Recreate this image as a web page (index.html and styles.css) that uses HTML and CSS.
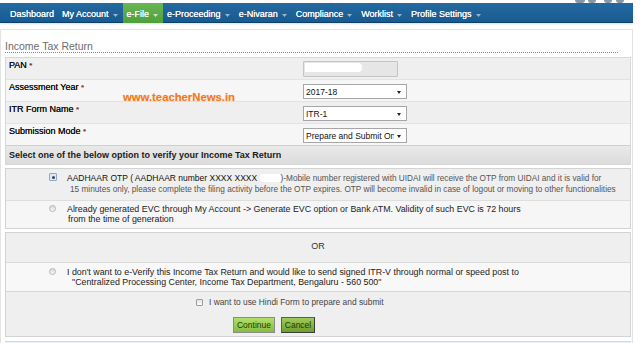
FILE: index.html
```html
<!DOCTYPE html>
<html lang="en">
<head>
<meta charset="utf-8">
<title>Income Tax Return</title>
<link rel="stylesheet" href="styles.css">
</head>
<body>
<div class="topstrip">
  <span class="blob b1"></span><span class="blob b2"></span><span class="blob b3"></span><span class="blob b4"></span>
</div>
<nav class="nav">
  <a class="nav-item">Dashboard</a>
  <a class="nav-item">My Account<svg class="caret" viewBox="0 0 5 3"><path d="M0 0H5L2.5 3Z"/></svg></a>
  <a class="nav-item active">e-File<svg class="caret" viewBox="0 0 5 3"><path d="M0 0H5L2.5 3Z"/></svg></a>
  <a class="nav-item">e-Proceeding<svg class="caret" viewBox="0 0 5 3"><path d="M0 0H5L2.5 3Z"/></svg></a>
  <a class="nav-item">e-Nivaran<svg class="caret" viewBox="0 0 5 3"><path d="M0 0H5L2.5 3Z"/></svg></a>
  <a class="nav-item">Compliance<svg class="caret" viewBox="0 0 5 3"><path d="M0 0H5L2.5 3Z"/></svg></a>
  <a class="nav-item">Worklist<svg class="caret" viewBox="0 0 5 3"><path d="M0 0H5L2.5 3Z"/></svg></a>
  <a class="nav-item">Profile Settings<svg class="caret" viewBox="0 0 5 3"><path d="M0 0H5L2.5 3Z"/></svg></a>
</nav>
<main class="panel">
  <div class="title">Income Tax Return</div>
  <div class="form-table">
    <div class="row dark">
      <div class="label">PAN <span class="req">*</span></div>
      <div class="field"><div class="pan-input"><span class="mask"></span></div></div>
    </div>
    <div class="row light">
      <div class="label">Assessment Year <span class="req">*</span></div>
      <div class="field"><div class="select"><span class="sel-text">2017-18</span><svg class="sel-arrow" viewBox="0 0 4 3"><path d="M0 0H4L2 3Z"/></svg></div></div>
    </div>
    <div class="row dark">
      <div class="label">ITR Form Name <span class="req">*</span></div>
      <div class="field"><div class="select"><span class="sel-text">ITR-1</span><svg class="sel-arrow" viewBox="0 0 4 3"><path d="M0 0H4L2 3Z"/></svg></div></div>
    </div>
    <div class="row light last">
      <div class="label">Submission Mode <span class="req">*</span></div>
      <div class="field"><div class="select"><span class="sel-text">Prepare and Submit Online</span><svg class="sel-arrow" viewBox="0 0 4 3"><path d="M0 0H4L2 3Z"/></svg></div></div>
    </div>
    <div class="section-head">Select one of the below option to verify your Income Tax Return</div>
  </div>

  <div class="opt-box">
    <div class="opt-row r1">
      <span class="radio checked"></span>
      <div class="opt-text">
        <div class="line"><span class="strong">AADHAAR OTP ( AADHAAR number XXXX XXXX </span><span class="mask2"></span><span class="grey">)-Mobile number registered with UIDAI will receive the OTP from UIDAI and it is valid for</span></div>
        <div class="line grey indent">15 minutes only, please complete the filing activity before the OTP expires. OTP will become invalid in case of logout or moving to other functionalities</div>
      </div>
    </div>
    <div class="opt-row r2">
      <span class="radio"></span>
      <div class="opt-text dark-text">
        <div class="line">Already generated EVC through My Account -&gt; Generate EVC option or Bank ATM. Validity of such EVC is 72 hours</div>
        <div class="line indent1">from the time of generation</div>
      </div>
    </div>
  </div>

  <div class="opt-box second">
    <div class="or-row">OR</div>
    <div class="opt-row r3">
      <span class="radio"></span>
      <div class="opt-text dark-text">
        <div class="line">I don't want to e-Verify this Income Tax Return and would like to send signed ITR-V through normal or speed post to</div>
        <div class="line indent2">"Centralized Processing Center, Income Tax Department, Bengaluru - 560 500"</div>
      </div>
    </div>
    <div class="actions">
      <div class="hindi"><span class="checkbox"></span><span>I want to use Hindi Form to prepare and submit</span></div>
      <div class="buttons">
        <button class="btn continue">Continue</button>
        <button class="btn cancel">Cancel</button>
      </div>
    </div>
  </div>
  <div class="footer-strip"></div>
  <div class="watermark">www.teacherNews.in</div>
</main>
</body>
</html>
```

FILE: styles.css
```css
html, body {
  margin: 0;
  padding: 0;
}
body {
  background: #ffffff;
  font-family: "Liberation Sans", Arial, sans-serif;
  width: 640px;
  height: 343px;
  overflow: hidden;
}

/* top strip with faint blobs */
.topstrip {
  height: 3px;
  width: 633px;
  display: flex;
  justify-content: flex-end;
  padding-right: 9px;
  box-sizing: border-box;
}
.blob {
  height: 3px;
  background: #8797ab;
  border-radius: 0 0 4px 4px;
}
.b1 { width: 10px; }
.b2 { width: 8px; margin-left: 3px; }
.b3 { width: 8px; margin-left: 8px; }
.b4 { width: 8px; margin-left: 4px; }

/* navigation */
.nav {
  display: flex;
  height: 20px;
  width: 633px;
  box-sizing: border-box;
  padding-left: 6px;
  background: linear-gradient(#2469a1, #175a8f);
  box-shadow: inset 0 -1px 0 #0c406e, 0 1px 2px rgba(0, 0, 0, 0.14);
  position: relative;
  z-index: 1;
}
.nav-item {
  display: flex;
  align-items: center;
  padding: 1px 4px 0 4px;
  color: #ffffff;
  font-size: 9px;
  text-decoration: none;
  white-space: nowrap;
  text-shadow: 0 0 0.4px #ffffff;
}
.nav-item.active {
  background: linear-gradient(#67b753, #4f9f3d);
}
.caret {
  width: 5px;
  height: 3px;
  margin: 3px 1px 0 4px;
  fill: #9db3c8;
}
.nav-item.active .caret {
  fill: #cde4c4;
}

/* main panel */
.panel {
  position: relative;
  margin-top: 6px;
  width: 633px;
  height: 314px;
  box-sizing: border-box;
  border: 1px solid #e3e3e3;
  border-bottom: none;
  padding: 10px 0 0 4px;
}
.title {
  width: 613px;
  font-size: 10.5px;
  line-height: 12px;
  color: #6c6c6c;
  border-bottom: 1px dotted #8a8a8a;
}

.form-table {
  margin-top: 4px;
  width: 626px;
  box-sizing: border-box;
  border: 1px solid #d8d8d8;
}
.row {
  display: grid;
  grid-template-columns: 297px 1fr;
  height: 22px;
  box-sizing: border-box;
  border-bottom: 1px solid #e2e2e2;
}
.row.dark { background: #efefef; }
.row.light { background: #f6f6f6; }
.row.last { border-bottom-color: #cfcfcf; }
.label {
  padding: 2px 0 0 3px;
  font-size: 9px;
  line-height: 11px;
  color: #111111;
  text-shadow: 0 0 0.3px #111111;
}
.req {
  color: #a83a3a;
  font-size: 8px;
}
.pan-input {
  margin-top: 3px;
  width: 95px;
  height: 16px;
  box-sizing: border-box;
  border: 1px solid #c4c4c4;
  border-radius: 1px;
  background: #e6e6e6;
  padding: 1px 0 0 1px;
}
.mask {
  display: block;
  width: 57px;
  height: 9px;
  background: #ffffff;
  border-radius: 0 4px 4px 0;
}
.select {
  margin-top: 4px;
  width: 104px;
  height: 15px;
  box-sizing: border-box;
  border: 1px solid #a6a6a6;
  background: #ffffff;
  display: flex;
  align-items: center;
  padding-left: 2px;
  font-size: 8.5px;
  color: #111111;
}
.sel-text {
  flex: 1;
  overflow: hidden;
  white-space: nowrap;
}
.sel-arrow {
  flex: none;
  width: 4px;
  height: 3px;
  margin: 1px 5px 0 3px;
  fill: #222222;
}
.section-head {
  height: 18px;
  line-height: 18px;
  padding-left: 3px;
  font-size: 9px;
  font-weight: bold;
  color: #1a1a1a;
  background: linear-gradient(#e9e9e9, #dcdcdc);
}

/* option boxes */
.opt-box {
  margin-top: 3px;
  width: 626px;
  box-sizing: border-box;
  border: 1px solid #d3d3d3;
}
.opt-row {
  display: flex;
  align-items: flex-start;
  padding-left: 43px;
  border-bottom: 1px solid #dedede;
}
.r1 {
  background: #efefef;
  padding-top: 4px;
  padding-bottom: 5px;
}
.r2 {
  background: #f6f6f6;
  padding-top: 3px;
  padding-bottom: 4px;
  border-bottom: none;
}
.r3 {
  background: #f8f8f8;
  padding-top: 4px;
  padding-bottom: 4px;
  border-bottom-color: #d6d6d6;
}
.radio {
  flex: none;
  width: 7px;
  height: 7px;
  margin: 1px 11px 0 0;
  box-sizing: border-box;
  border-radius: 50%;
  border: 1px solid #b4b4b4;
  background: linear-gradient(#d9d9d9, #f8f8f8);
}
.radio.checked {
  position: relative;
  width: 8px;
  height: 8px;
  margin: 0 10px 0 0;
  border-radius: 1px;
  border: 1px solid #8fa9c6;
  background: #dfe7ef;
}
.radio.checked::after {
  content: "";
  position: absolute;
  left: 1.5px;
  top: 1.5px;
  width: 3px;
  height: 3px;
  border-radius: 50%;
  background: #37475a;
}
.opt-text .line {
  white-space: nowrap;
}
.r1 .line {
  line-height: 10.5px;
  font-size: 8.25px;
}
.strong {
  font-size: 8.5px;
  color: #111111;
}
.grey {
  color: #555555;
  font-size: 8.25px;
}
.mask2 {
  display: inline-block;
  width: 21px;
  height: 8px;
  background: #ffffff;
  border-radius: 3px;
  vertical-align: -1px;
}
.indent { padding-left: 3px; }
.indent1 { padding-left: 1px; }
.indent2 { padding-left: 5px; }
.dark-text .line {
  font-size: 8.85px;
  line-height: 10px;
  color: #222222;
}
.or-row {
  height: 30px;
  box-sizing: border-box;
  line-height: 27px;
  text-align: center;
  font-size: 9px;
  color: #333333;
  background: #efefef;
  border-bottom: 1px solid #dadada;
}
.actions {
  background: #efefef;
  padding: 4.5px 0 3px 0;
}
.hindi {
  display: flex;
  align-items: center;
  padding-left: 190px;
  font-size: 8.4px;
  line-height: 11px;
  color: #444444;
}
.checkbox {
  flex: none;
  width: 7px;
  height: 7px;
  box-sizing: border-box;
  margin-right: 6px;
  border: 1px solid #9c9c9c;
  border-radius: 1px;
  background: linear-gradient(#e4e4e4, #fbfbfb);
}
.buttons {
  display: flex;
  gap: 6px;
  margin-top: 9.5px;
  padding-left: 227px;
}
.btn {
  height: 16px;
  box-sizing: border-box;
  padding: 0;
  font-family: "Liberation Sans", Arial, sans-serif;
  font-size: 8.5px;
  line-height: 14px;
  color: #1f380b;
  text-align: center;
}
.btn.continue {
  width: 42px;
  border: 1px solid #8a8a8a;
  background: linear-gradient(#b4de6c, #84bd3e);
}
.btn.cancel {
  width: 34px;
  border: 1px solid #3c3c3c;
  border-top-color: #5c5c5c;
  border-left-color: #5c5c5c;
  background: linear-gradient(#9fcb5a, #6e9e30);
}
.footer-strip {
  margin-top: 4px;
  width: 626px;
  height: 10px;
  box-sizing: border-box;
  border-top: 1px solid #c8dce9;
  background: #e4eff6;
}

/* watermark overlay */
.watermark {
  position: absolute;
  left: 122px;
  top: 61px;
  font-size: 11.3px;
  line-height: 12px;
  font-weight: bold;
  color: #f47920;
  text-shadow: 0 0 1px rgba(244, 121, 32, 0.35);
  white-space: nowrap;
}
```
